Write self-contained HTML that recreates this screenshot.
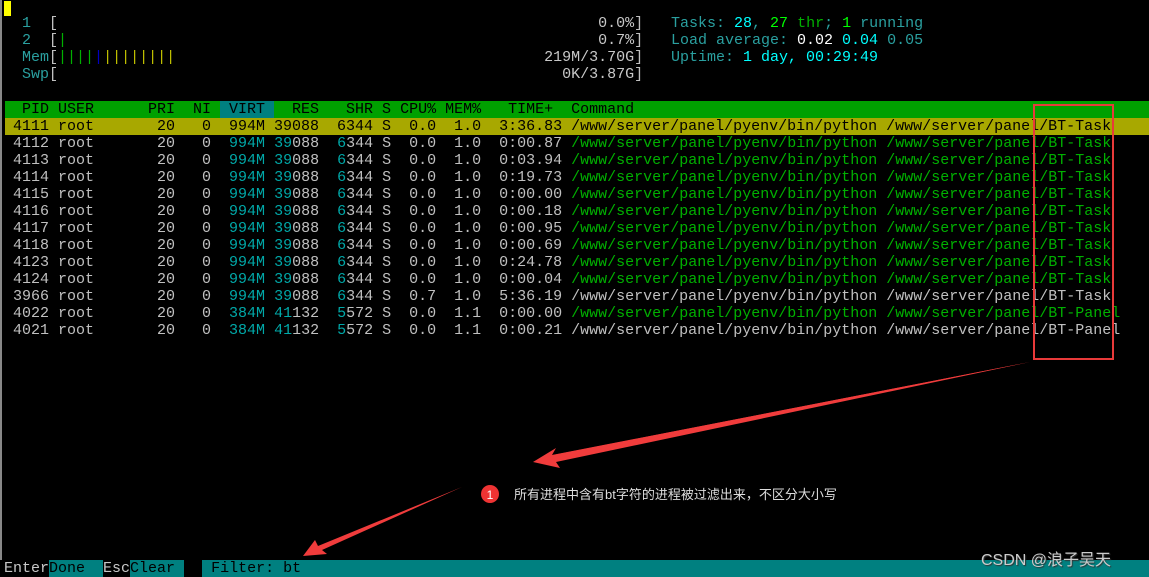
<!DOCTYPE html>
<html><head><meta charset="utf-8"><style>
body{margin:0;width:1149px;height:577px;background:#000;overflow:hidden;position:relative;font-family:"Liberation Mono",monospace;font-size:15px;}
.l{position:absolute;left:4px;white-space:pre;height:17px;line-height:17px;color:#c0c0c0;}
.w{color:#c8c8c8}.c{color:#00a8a8}.t{color:#2aa0a0}.g{color:#00b000}.bc{color:#00ffff}.bg{color:#00ff00}.wh{color:#fff}
.y{color:#c0c000}.bl{color:#0000c0}
</style></head><body>
<div style="position:absolute;left:0;top:0;width:2px;height:577px;background:#888"></div>
<div style="position:absolute;left:4px;top:1px;width:7px;height:15px;background:#ffff00"></div>

<div class="l" style="top:15px"><span class="t">  1  </span>[                                                            <span class="w">0.0%</span>]</div>
<div class="l" style="top:32px"><span class="t">  2  </span>[<span class="g">|</span>                                                           <span class="w">0.7%</span>]</div>
<div class="l" style="top:49px"><span class="t">  Mem</span>[<span class="g">||||</span><span class="bl">|</span><span class="y">||||||||</span>                                         <span class="w">219M/3.70G</span>]</div>
<div class="l" style="top:66px"><span class="t">  Swp</span>[                                                        <span class="w">0K/3.87G</span>]</div>

<div class="l" style="top:15px;left:671px"><span class="t">Tasks: </span><span class="bc">28</span><span class="t">, </span><span class="bg">27</span><span class="g"> thr</span><span class="t">; </span><span class="bg">1</span><span class="t"> running</span></div>
<div class="l" style="top:32px;left:671px"><span class="t">Load average: </span><span class="wh">0.02 </span><span class="bc">0.04 </span><span class="t">0.05</span></div>
<div class="l" style="top:49px;left:671px"><span class="t">Uptime: </span><span class="bc">1 day, 00:29:49</span></div>

<div style="position:absolute;left:5px;top:101px;width:1144px;height:17px;background:#00a000"></div>
<div style="position:absolute;left:220px;top:101px;width:54px;height:17px;background:#008080"></div>
<div class="l" style="top:101px;color:#000">  PID USER      PRI  NI  VIRT   RES   SHR S CPU% MEM%   TIME+  Command</div>
<div style="position:absolute;left:5px;top:118px;width:1144px;height:17px;background:#a8a800"></div>
<div class="l" style="top:118px;color:#000"> 4111 root       20   0  994M 39088  6344 S  0.0  1.0  3:36.83 /www/server/panel/pyenv/bin/python /www/server/panel/BT-Task</div>
<div class="l" style="top:135px"> 4112 root       20   0  <span class="c">994M</span> <span class="c">39</span>088  <span class="c">6</span>344 S  0.0  1.0  0:00.87 <span class="g">/www/server/panel/pyenv/bin/python /www/server/panel/BT-Task</span></div>
<div class="l" style="top:152px"> 4113 root       20   0  <span class="c">994M</span> <span class="c">39</span>088  <span class="c">6</span>344 S  0.0  1.0  0:03.94 <span class="g">/www/server/panel/pyenv/bin/python /www/server/panel/BT-Task</span></div>
<div class="l" style="top:169px"> 4114 root       20   0  <span class="c">994M</span> <span class="c">39</span>088  <span class="c">6</span>344 S  0.0  1.0  0:19.73 <span class="g">/www/server/panel/pyenv/bin/python /www/server/panel/BT-Task</span></div>
<div class="l" style="top:186px"> 4115 root       20   0  <span class="c">994M</span> <span class="c">39</span>088  <span class="c">6</span>344 S  0.0  1.0  0:00.00 <span class="g">/www/server/panel/pyenv/bin/python /www/server/panel/BT-Task</span></div>
<div class="l" style="top:203px"> 4116 root       20   0  <span class="c">994M</span> <span class="c">39</span>088  <span class="c">6</span>344 S  0.0  1.0  0:00.18 <span class="g">/www/server/panel/pyenv/bin/python /www/server/panel/BT-Task</span></div>
<div class="l" style="top:220px"> 4117 root       20   0  <span class="c">994M</span> <span class="c">39</span>088  <span class="c">6</span>344 S  0.0  1.0  0:00.95 <span class="g">/www/server/panel/pyenv/bin/python /www/server/panel/BT-Task</span></div>
<div class="l" style="top:237px"> 4118 root       20   0  <span class="c">994M</span> <span class="c">39</span>088  <span class="c">6</span>344 S  0.0  1.0  0:00.69 <span class="g">/www/server/panel/pyenv/bin/python /www/server/panel/BT-Task</span></div>
<div class="l" style="top:254px"> 4123 root       20   0  <span class="c">994M</span> <span class="c">39</span>088  <span class="c">6</span>344 S  0.0  1.0  0:24.78 <span class="g">/www/server/panel/pyenv/bin/python /www/server/panel/BT-Task</span></div>
<div class="l" style="top:271px"> 4124 root       20   0  <span class="c">994M</span> <span class="c">39</span>088  <span class="c">6</span>344 S  0.0  1.0  0:00.04 <span class="g">/www/server/panel/pyenv/bin/python /www/server/panel/BT-Task</span></div>
<div class="l" style="top:288px"> 3966 root       20   0  <span class="c">994M</span> <span class="c">39</span>088  <span class="c">6</span>344 S  0.7  1.0  5:36.19 /www/server/panel/pyenv/bin/python /www/server/panel/BT-Task</div>
<div class="l" style="top:305px"> 4022 root       20   0  <span class="c">384M</span> <span class="c">41</span>132  <span class="c">5</span>572 S  0.0  1.1  0:00.00 <span class="g">/www/server/panel/pyenv/bin/python /www/server/panel/BT-Panel</span></div>
<div class="l" style="top:322px"> 4021 root       20   0  <span class="c">384M</span> <span class="c">41</span>132  <span class="c">5</span>572 S  0.0  1.1  0:00.21 /www/server/panel/pyenv/bin/python /www/server/panel/BT-Panel</div>

<div style="position:absolute;left:1033px;top:104px;width:77px;height:252px;border:2px solid #e83a3a"></div>

<svg style="position:absolute;left:0;top:0" width="1149" height="577">
<polygon points="1030,362 552,455 556,448 533,462 560,468 556,462" fill="#f03c3c"/>
<polygon points="1030,362 555,460 553,455" fill="#f03c3c"/>
<polygon points="462,487 318,546 315,540 303,556 327,554 322,550" fill="#f03c3c"/>
<circle cx="490" cy="494" r="9" fill="#ee3333"/>
<text x="490" y="499" fill="#fff" font-family="Liberation Sans,sans-serif" font-size="12" text-anchor="middle">1</text>
</svg>
<div style="position:absolute;left:514px;top:484px;color:#ddd;font-family:'Liberation Sans','Noto Sans CJK SC',sans-serif;font-size:13px;white-space:pre">所有进程中含有bt字符的进程被过滤出来，不区分大小写</div>

<div style="position:absolute;left:0;top:560px;width:1149px;height:17px;background:#008080"></div>
<div style="position:absolute;left:0;top:560px;width:49px;height:17px;background:#000"></div>
<div style="position:absolute;left:103px;top:560px;width:27px;height:17px;background:#000"></div>
<div style="position:absolute;left:184px;top:560px;width:18px;height:17px;background:#000"></div>
<div class="l" style="top:560px;left:4px;color:#c8c8c8">Enter<span style="color:#000">Done  </span>Esc<span style="color:#000">Clear </span>  <span style="color:#000"> Filter: bt</span></div>
<div style="position:absolute;left:981px;top:546px;color:#ccc;font-family:'Liberation Sans','Noto Sans CJK SC',sans-serif;font-size:16px;white-space:pre;text-shadow:1px 1px 1px #333">CSDN @浪子吴天</div>
</body></html>
